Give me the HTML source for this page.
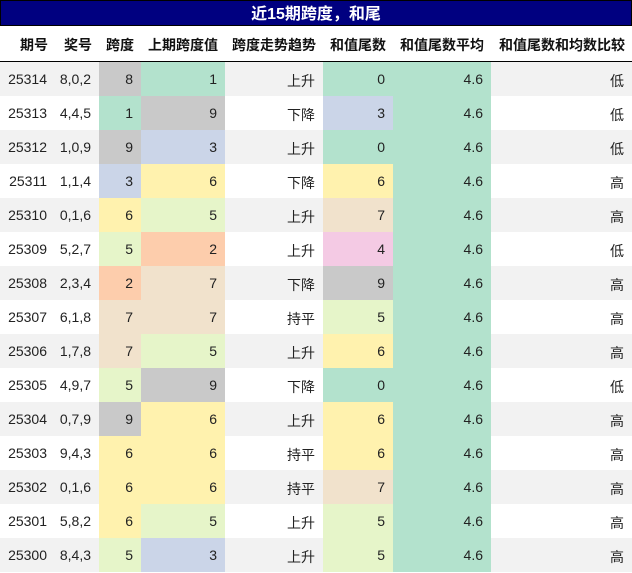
<!DOCTYPE html>
<html><head><meta charset="utf-8"><style>
body{margin:0;background:#fff;font-family:"Liberation Sans","Noto Sans CJK SC",sans-serif;}
.t{position:absolute;left:0;top:0;width:630px;height:24px;background:#000080;border:1px solid #000;color:#fff;font-weight:bold;font-size:16px;line-height:28px;text-align:center;}
table{position:absolute;left:0;top:26px;border-collapse:collapse;table-layout:fixed;width:632px;font-size:14px;color:#222;}
th{height:33px;font-weight:bold;text-align:right;padding:2px 7px 0 0;border-bottom:1px solid #000;white-space:nowrap;color:#111}
td{height:34px;padding:0 8px 0 0;text-align:right;white-space:nowrap}
td span{position:relative;top:2px}
tr:nth-child(even) td{background:#f2f2f2}
td.a{background:#b3e2cd!important}td.b{background:#cbd5e8!important}td.c{background:#c9c9c9!important}
td.y{background:#fff2ae!important}td.l{background:#e6f5c9!important}td.o{background:#fdcdac!important}
td.e{background:#f1e2cc!important}td.p{background:#f4cae4!important}
</style></head><body>
<div class="t">近15期跨度，和尾</div>
<table>
<colgroup><col style="width:55px"><col style="width:44px"><col style="width:42px"><col style="width:84px"><col style="width:98px"><col style="width:70px"><col style="width:98px"><col style="width:141px"></colgroup>
<tr><th>期号</th><th>奖号</th><th>跨度</th><th>上期跨度值</th><th>跨度走势趋势</th><th>和值尾数</th><th>和值尾数平均</th><th>和值尾数和均数比较</th></tr>
<tr><td>25314</td><td>8,0,2</td><td class="c">8</td><td class="a">1</td><td><span>上升</span></td><td class="a">0</td><td class="a">4.6</td><td><span>低</span></td></tr>
<tr><td>25313</td><td>4,4,5</td><td class="a">1</td><td class="c">9</td><td><span>下降</span></td><td class="b">3</td><td class="a">4.6</td><td><span>低</span></td></tr>
<tr><td>25312</td><td>1,0,9</td><td class="c">9</td><td class="b">3</td><td><span>上升</span></td><td class="a">0</td><td class="a">4.6</td><td><span>低</span></td></tr>
<tr><td>25311</td><td>1,1,4</td><td class="b">3</td><td class="y">6</td><td><span>下降</span></td><td class="y">6</td><td class="a">4.6</td><td><span>高</span></td></tr>
<tr><td>25310</td><td>0,1,6</td><td class="y">6</td><td class="l">5</td><td><span>上升</span></td><td class="e">7</td><td class="a">4.6</td><td><span>高</span></td></tr>
<tr><td>25309</td><td>5,2,7</td><td class="l">5</td><td class="o">2</td><td><span>上升</span></td><td class="p">4</td><td class="a">4.6</td><td><span>低</span></td></tr>
<tr><td>25308</td><td>2,3,4</td><td class="o">2</td><td class="e">7</td><td><span>下降</span></td><td class="c">9</td><td class="a">4.6</td><td><span>高</span></td></tr>
<tr><td>25307</td><td>6,1,8</td><td class="e">7</td><td class="e">7</td><td><span>持平</span></td><td class="l">5</td><td class="a">4.6</td><td><span>高</span></td></tr>
<tr><td>25306</td><td>1,7,8</td><td class="e">7</td><td class="l">5</td><td><span>上升</span></td><td class="y">6</td><td class="a">4.6</td><td><span>高</span></td></tr>
<tr><td>25305</td><td>4,9,7</td><td class="l">5</td><td class="c">9</td><td><span>下降</span></td><td class="a">0</td><td class="a">4.6</td><td><span>低</span></td></tr>
<tr><td>25304</td><td>0,7,9</td><td class="c">9</td><td class="y">6</td><td><span>上升</span></td><td class="y">6</td><td class="a">4.6</td><td><span>高</span></td></tr>
<tr><td>25303</td><td>9,4,3</td><td class="y">6</td><td class="y">6</td><td><span>持平</span></td><td class="y">6</td><td class="a">4.6</td><td><span>高</span></td></tr>
<tr><td>25302</td><td>0,1,6</td><td class="y">6</td><td class="y">6</td><td><span>持平</span></td><td class="e">7</td><td class="a">4.6</td><td><span>高</span></td></tr>
<tr><td>25301</td><td>5,8,2</td><td class="y">6</td><td class="l">5</td><td><span>上升</span></td><td class="l">5</td><td class="a">4.6</td><td><span>高</span></td></tr>
<tr><td>25300</td><td>8,4,3</td><td class="l">5</td><td class="b">3</td><td><span>上升</span></td><td class="l">5</td><td class="a">4.6</td><td><span>高</span></td></tr>
</table>
</body></html>
